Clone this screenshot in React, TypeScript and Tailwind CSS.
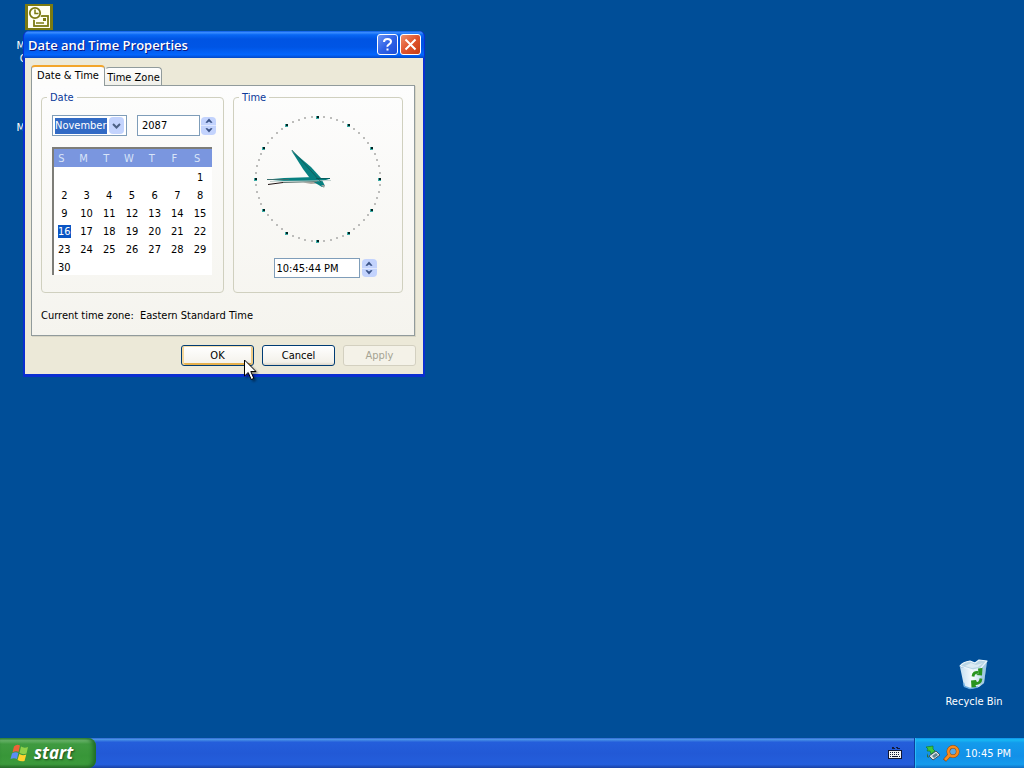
import { useState } from "react";
import type { ReactNode } from "react";

const WEEKDAYS = ["S", "M", "T", "W", "T", "F", "S"];
const MONTHS = [
  "January", "February", "March", "April", "May", "June",
  "July", "August", "September", "October", "November", "December",
];
const WEEKS: (number | null)[][] = [
  [null, null, null, null, null, null, 1],
  [2, 3, 4, 5, 6, 7, 8],
  [9, 10, 11, 12, 13, 14, 15],
  [16, 17, 18, 19, 20, 21, 22],
  [23, 24, 25, 26, 27, 28, 29],
  [30, null, null, null, null, null, null],
];

function Spinner({ label }: { label: string }) {
  return (
    <div className="flex h-[18px] w-[15px] shrink-0 flex-col overflow-hidden rounded-sm bg-[#c3d3fd]">
      <button type="button" aria-label={`${label} up`} className="flex flex-1 items-center justify-center border-b border-[#dfe8ff]">
        <svg width="8" height="5" viewBox="0 0 8 5"><path d="M.5 4.500 4 .5l3.500 4-1.500.5-2-1.500L2 5z" fill="#3b5488" /></svg>
      </button>
      <button type="button" aria-label={`${label} down`} className="flex flex-1 items-center justify-center">
        <svg width="8" height="5" viewBox="0 0 8 5"><path d="M.5.5 4 4.500l3.500-4L6 0 4 1.500 2 0z" fill="#3b5488" /></svg>
      </button>
    </div>
  );
}

function Group({ title, className, children }: { title: string; className: string; children: ReactNode }) {
  return (
    <fieldset className={`min-w-0 shrink-0 rounded border border-[#d0d0bf] ${className}`}>
      <legend className="ml-[5px] px-[3px] pt-px leading-[13px] text-[#0b3a9a]">{title}</legend>
      {children}
    </fieldset>
  );
}

function Clock() {
  const ticks = Array.from({ length: 60 }, (_, i) => {
    const a = (i * Math.PI) / 30;
    return { i, x: Math.round(65 + 62 * Math.sin(a)), y: Math.round(64 - 62 * Math.cos(a)) };
  });
  return (
    <svg width="130" height="130" viewBox="0 0 130 130" role="img" aria-label="Clock" shapeRendering="crispEdges">
      {ticks.map(({ i, x, y }) =>
        i % 5 === 0 ? (
          <g key={i}>
            <rect x={x - 2} y={y - 1} width="3" height="3" fill="#38aaa4" />
            <rect x={x - 1} y={y - 1} width="2" height="2" fill="#022322" />
          </g>
        ) : (
          <rect key={i} x={x - 1} y={y - 1} width="2" height="2" fill="#bdbdbb" />
        ),
      )}
      <g shapeRendering="geometricPrecision">
        <path d="M50 67.500 58 69l8-.5 2-2z" fill="#b0aca4" />
        <path d="M14 64.500 31 63 62 62 76 64.500 62 66.500 31 66z" fill="#078080" />
        <path d="M38 35 58 52 68 63 72 71 69 72 59 66 50 54z" fill="#078080" />
        <path d="m68 70 3 3 1-3z" fill="#9aa09c" />
        <path d="M14 64.500h22" stroke="#39706f" fill="none" />
        <path d="m15 69.500 15-2" stroke="#1d1111" fill="none" />
        <path d="m30 67.500 34-1" stroke="#59706c" fill="none" />
        <path d="M17 66.500 50 66l28-.500" stroke="#b8c9c7" strokeWidth=".8" fill="none" />
        <path d="M63 63.500h14" stroke="#075f60" fill="none" />
        <path d="m39 35 29 32" stroke="#194f4f" strokeWidth=".7" fill="none" />
      </g>
    </svg>
  );
}

function OutlookIcon() {
  return (
    <svg width="28" height="26" viewBox="0 0 28 26">
      <rect width="28" height="26" fill="#7b7b12" />
      <rect x="3" y="2" width="22" height="22" fill="#fffff2" />
      <rect x="9" y="12" width="14" height="10" fill="#fffff2" stroke="#7b7b12" strokeWidth="1.800" />
      <rect x="18" y="14" width="3" height="3" fill="#7b7b12" />
      <path d="M11 19h8" stroke="#7b7b12" strokeWidth="1.500" />
      <circle cx="10" cy="9.500" r="6.500" fill="#fffff2" />
      <circle cx="10" cy="9" r="5.200" fill="#fffff2" stroke="#7b7b12" strokeWidth="1.800" />
      <path d="M10 5.500v4h3.500" fill="none" stroke="#7b7b12" strokeWidth="1.500" />
    </svg>
  );
}

function RecycleIcon() {
  return (
    <svg width="32" height="32" viewBox="0 0 32 32">
      <defs>
        <linearGradient id="bin" x1="0" x2="1">
          <stop offset="0" stopColor="#c4def0" />
          <stop offset=".45" stopColor="#f6fbfe" />
          <stop offset="1" stopColor="#a9cfe8" />
        </linearGradient>
      </defs>
      <path d="M2 9 23 11 29 3 26 25 21 29 12 31 6 28z" fill="url(#bin)" />
      <path d="M2 8Q5 4 12 3L17 5 21 2 29 3 23 10 15 12z" fill="#b9d5e5" stroke="#eef8fd" strokeWidth="1.200" strokeLinejoin="round" />
      <path d="M7 8 13 5 18 7 25 5 20 9 14 10z" fill="#dcebf3" />
      <path d="M23 11 22 28 26 25 29 4z" fill="#8ab9da" opacity=".5" />
      <path d="M5.500 25 6.500 28.500 12 30.500 20 29" fill="none" stroke="#6caee2" strokeWidth="1.500" />
      <g fill="none" stroke="#2a9420" strokeWidth="2.800">
        <path d="M15 18.500Q15.500 13.500 20.500 14.500" />
        <path d="M23 20.500Q22.500 26 17 25.500" />
      </g>
      <path d="m20 10.500 4.500-.5-.500 7.500-6-.500 2.500-1.500zM18 22l-5 .5.5 7 5-.5-1-1.500 2-2z" fill="#2a9420" />
    </svg>
  );
}

function WindowsFlag() {
  return (
    <svg width="20" height="18" viewBox="0 0 20 18">
      <path d="M4 2.500q3-3 6-1L8.500 8Q6 6.500 2.500 8.500z" fill="#ef6238" />
      <path d="M11 2.500q3 2 7 .500L16.500 9.500Q13 11 9.500 9z" fill="#8fd14a" />
      <path d="M2 9.500Q5.500 7.500 8.300 9L7 15Q4 13.500.5 15z" fill="#5b8df3" />
      <path d="M9.300 10q3 2 7 .5L14.500 17q-3.500 1-7-1z" fill="#ffd22e" />
    </svg>
  );
}

function KeyboardIcon() {
  return (
    <svg width="14" height="14" viewBox="0 0 14 14" shapeRendering="crispEdges">
      <path d="M4 1h2v1h2V1h2v1h2v1H9V2H7v1H4z" fill="#151c3a" />
      <rect x="0" y="4" width="14" height="9" fill="#101733" />
      <rect x="1" y="5" width="12" height="7" fill="#f4f4f4" />
      <path d="M2 6.500h10M2 8.500h10" stroke="#101733" strokeDasharray="1 1" />
      <path d="M2 10.500h1M4 10.500h6M11 10.500h1" stroke="#101733" />
    </svg>
  );
}

function DeviceIcon() {
  return (
    <svg width="16" height="16" viewBox="0 0 16 16">
      <path d="m4 11 7-5 4 4-7 5z" fill="#dce4e7" stroke="#44525b" />
      <path d="m7 11 4-3 2 2-4 3z" fill="#5e8291" />
      <path d="M1 2 8 1 8 4 10 6 6 9 5 6 2 6 3 4z" fill="#3fc63c" stroke="#147a30" strokeWidth=".7" />
      <path d="m2 8 2 5-2-1z" fill="#2b7138" />
    </svg>
  );
}

function MagnifierIcon() {
  return (
    <svg width="17" height="17" viewBox="0 0 17 17">
      <circle cx="10" cy="6.500" r="4.700" fill="#58a9e8" stroke="#8a4712" strokeWidth="3.600" />
      <path d="m6.500 10-5 5.500" stroke="#8a4712" strokeWidth="4" />
      <circle cx="10" cy="6.500" r="4.700" fill="none" stroke="#f98b1c" strokeWidth="2.600" />
      <path d="m6.500 10-4.500 5" stroke="#f98b1c" strokeWidth="2.800" />
    </svg>
  );
}

function DateTimeTab() {
  const [month, setMonth] = useState("November");
  const [year, setYear] = useState("2087");
  const [day, setDay] = useState(16);
  const [time, setTime] = useState("10:45:44 PM");

  return (
    <>
      <div className="flex gap-[9px]">
        <Group title="Date" className="h-[203px] w-[183px]">
          <div className="flex items-center pt-[11px] pl-[10px]">
            <div className="flex h-[21px] w-[75px] shrink-0 items-center justify-between border border-[#7f9db9] bg-white px-[2px]">
              <select
                aria-label="Month"
                value={month}
                onChange={(e) => setMonth(e.target.value)}
                className="h-[16px] w-[52px] appearance-none bg-[#316ac5] text-white outline-none"
              >
                {MONTHS.map((m) => <option key={m}>{m}</option>)}
              </select>
              <span className="pointer-events-none flex h-[17px] w-[15px] items-center justify-center rounded-sm bg-[#c3d3fd]">
                <svg width="9" height="6" viewBox="0 0 9 6"><path d="m1 1 3.500 3.500L8 1" fill="none" stroke="#4d6185" strokeWidth="2" /></svg>
              </span>
            </div>
            <input
              aria-label="Year"
              value={year}
              onChange={(e) => setYear(e.target.value)}
              className="mr-px ml-[10px] h-[21px] w-[63px] shrink-0 border border-[#7f9db9] bg-white px-1 outline-none"
            />
            <Spinner label="Year" />
          </div>
          <table className="mt-[11px] ml-[10px] w-[160px] table-fixed border-collapse border-t-2 border-l-2 border-[#7d7d78] bg-white text-center">
            <thead>
              <tr className="h-[18px] bg-[#7a96df] text-[#d8e4f8]">
                {WEEKDAYS.map((d, i) => <th key={i} scope="col" className="p-0 pt-[2px] pr-[7px] leading-[16px] font-normal">{d}</th>)}
              </tr>
            </thead>
            <tbody>
              {WEEKS.map((week, w) => (
                <tr key={w} className="h-[18px]">
                  {week.map((d, i) => (
                    <td key={i} className="p-0 pt-[2px] pr-px">
                      {d !== null && (
                        <button
                          type="button"
                          onClick={() => setDay(d)}
                          className={d === day ? "mx-auto block h-[13px] bg-[#0a55c4] leading-[13px] text-white" : "mx-auto block h-[13px] leading-[13px]"}
                        >
                          {d}
                        </button>
                      )}
                    </td>
                  ))}
                </tr>
              ))}
            </tbody>
          </table>
        </Group>
        <Group title="Time" className="h-[203px] w-[170px]">
          <div className="flex flex-col items-center pt-[11px]">
            <Clock />
            <div className="mt-[13px] flex items-center gap-[2px] pl-[14px]">
              <input
                aria-label="Time"
                value={time}
                onChange={(e) => setTime(e.target.value)}
                className="h-[20px] w-[86px] border border-[#7f9db9] bg-white px-[2px] outline-none"
              />
              <Spinner label="Time" />
            </div>
          </div>
        </Group>
      </div>
      <p className="mt-4 leading-[14px] whitespace-pre">Current time zone:  Eastern Standard Time</p>
    </>
  );
}

function PropertiesWindow() {
  return (
    <section
      aria-label="Date and Time Properties"
      className="absolute top-[31px] left-[23px] w-[402px] rounded-t-md border-x-2 border-b-[3px] border-[#0a2fd0] bg-[#ece9d8]"
    >
      <header className="-mx-[2px] flex h-[27px] items-center rounded-t-md border-x border-[#0a2fd0] bg-[linear-gradient(180deg,#0a5be8_0%,#3a8dff_6%,#0868f5_14%,#0054e3_30%,#0055e5_60%,#0366fd_88%,#0248c8_100%)] pr-[3px] pl-1">
        <h1 className="flex-1 font-['Open_Sans',sans-serif] text-[13px] leading-4 font-semibold text-white [text-shadow:1px_1px_#0a1883]">Date and Time Properties</h1>
        <button type="button" aria-label="Help" className="mr-[2px] flex h-[21px] w-[21px] items-center justify-center rounded-[3px] border border-white bg-[linear-gradient(135deg,#6a94f5,#2f62e6_50%,#1c4fd8)]">
          <svg width="13" height="15" viewBox="0 0 13 15"><path d="M3 5Q3 2 6.500 2t3.500 2.700Q10 6 8 7.300T6.500 9.800M6.500 11.500v2" fill="none" stroke="#fff" strokeWidth="2" /></svg>
        </button>
        <button type="button" aria-label="Close" className="flex h-[21px] w-[21px] items-center justify-center rounded-[3px] border border-white bg-[linear-gradient(135deg,#f0906c,#e0532c_50%,#c63d14)]">
          <svg width="13" height="13" viewBox="0 0 13 13"><path d="m1.500 1.500 10 10m0-10-10 10" stroke="#fff" strokeWidth="2" /></svg>
        </button>
      </header>
      <div className="pt-[7px] pr-2 pb-2 pl-[6px]">
        <div role="tablist" className="flex items-end">
          <button role="tab" aria-selected="true" type="button" className="relative -mb-px h-[21px] w-[74px] rounded-t-sm border-x border-t-2 border-x-[#919b9c] border-t-[#f2a52b] bg-[#fdfdfc] pb-[2px] whitespace-nowrap">Date &amp; Time</button>
          <button role="tab" aria-selected="false" type="button" className="h-[18px] w-[57px] rounded-t-sm border-x border-t border-[#919b9c] border-l-transparent bg-[linear-gradient(180deg,#fefefe,#f0f0ea)] pt-px whitespace-nowrap">Time Zone</button>
        </div>
        <div role="tabpanel" className="border border-[#919b9c] bg-[linear-gradient(180deg,#fdfdfd,#f5f4ee)] pt-[4px] pr-[10px] pb-3 pl-[9px] shadow-[1px_1px_#d8d5c4]">
          <DateTimeTab />
        </div>
        <div className="mt-[9px] -mr-px flex justify-end gap-2">
          <button type="button" className="h-[21px] w-[73px] rounded-[3px] border border-[#003c74] bg-[linear-gradient(180deg,#fff,#f3f1ea)] shadow-[inset_0_1px_#f8e0ae,inset_-2px_0_#f0cb83,inset_2px_0_#f5d79b,inset_0_-2px_#e6b04c]">OK</button>
          <button type="button" className="h-[21px] w-[73px] rounded-[3px] border border-[#003c74] bg-[linear-gradient(180deg,#fff,#f3f1ea_85%,#dcd5c8)]">Cancel</button>
          <button type="button" disabled className="h-[21px] w-[73px] rounded-[3px] border border-[#d3d0c0] bg-[#f4f2e8] text-[#a5a392]">Apply</button>
        </div>
      </div>
    </section>
  );
}

function Pointer() {
  return (
    <svg className="pointer-events-none absolute top-[359px] left-[244px] drop-shadow-[2px_2px_1px_rgba(0,0,0,0.4)]" width="13" height="22" viewBox="0 0 13 22">
      <path d="M.5 1v16l3.700-3.500 3 7 2.600-1.100-3-6.900H12z" fill="#fff" stroke="#000" />
    </svg>
  );
}

export default function App() {
  return (
    <div className="flex h-screen flex-col overflow-hidden bg-[#004e98] font-['DejaVu_Sans_Condensed','DejaVu_Sans',sans-serif] text-[11px] leading-[13px] text-black">
      <main className="relative flex-1">
        <div className="absolute top-1 left-0 flex w-[78px] flex-col items-center text-center text-white">
          <OutlookIcon />
          <span className="mt-[9px]">Microsoft<br />Outlook</span>
          <span className="mt-[56px]">Microsoft</span>
        </div>
        <div className="absolute right-[10px] bottom-[30px] flex w-20 flex-col items-center text-center text-white">
          <RecycleIcon />
          <span className="mt-[5px] whitespace-nowrap">Recycle Bin</span>
        </div>
        <PropertiesWindow />
        <Pointer />
      </main>
      <footer className="flex h-[30px] bg-[linear-gradient(180deg,#3168d5_0%,#4993e6_5%,#245edb_14%,#2259d6_50%,#245edc_88%,#1941a5_100%)] text-white">
        <button type="button" className="flex w-[96px] items-center gap-1 rounded-r-lg bg-[linear-gradient(180deg,#388e3c_0%,#6cb66c_8%,#3f9a40_20%,#389638_60%,#3c9a3c_88%,#2c6d2c_100%)] pl-[10px] shadow-[inset_-3px_0_4px_#1f6b26]">
          <WindowsFlag />
          <span className="font-['Open_Sans',sans-serif] text-[17px] leading-5 font-bold italic [text-shadow:1px_1px_2px_#1c4a1c]">start</span>
        </button>
        <div className="flex flex-1 items-center justify-end pr-3"><KeyboardIcon /></div>
        <div className="flex w-[110px] items-center border-l border-[#0c3f9e] bg-[linear-gradient(180deg,#0d8dea_0%,#18b9f4_6%,#139bec_16%,#1290e8_60%,#159bec_88%,#0f6fc4_100%)] pl-[10px] shadow-[inset_1px_0_#2bbcf5]">
          <DeviceIcon />
          <span className="ml-[2px] flex"><MagnifierIcon /></span>
          <time className="ml-[5px] whitespace-nowrap">10:45 PM</time>
        </div>
      </footer>
    </div>
  );
}
